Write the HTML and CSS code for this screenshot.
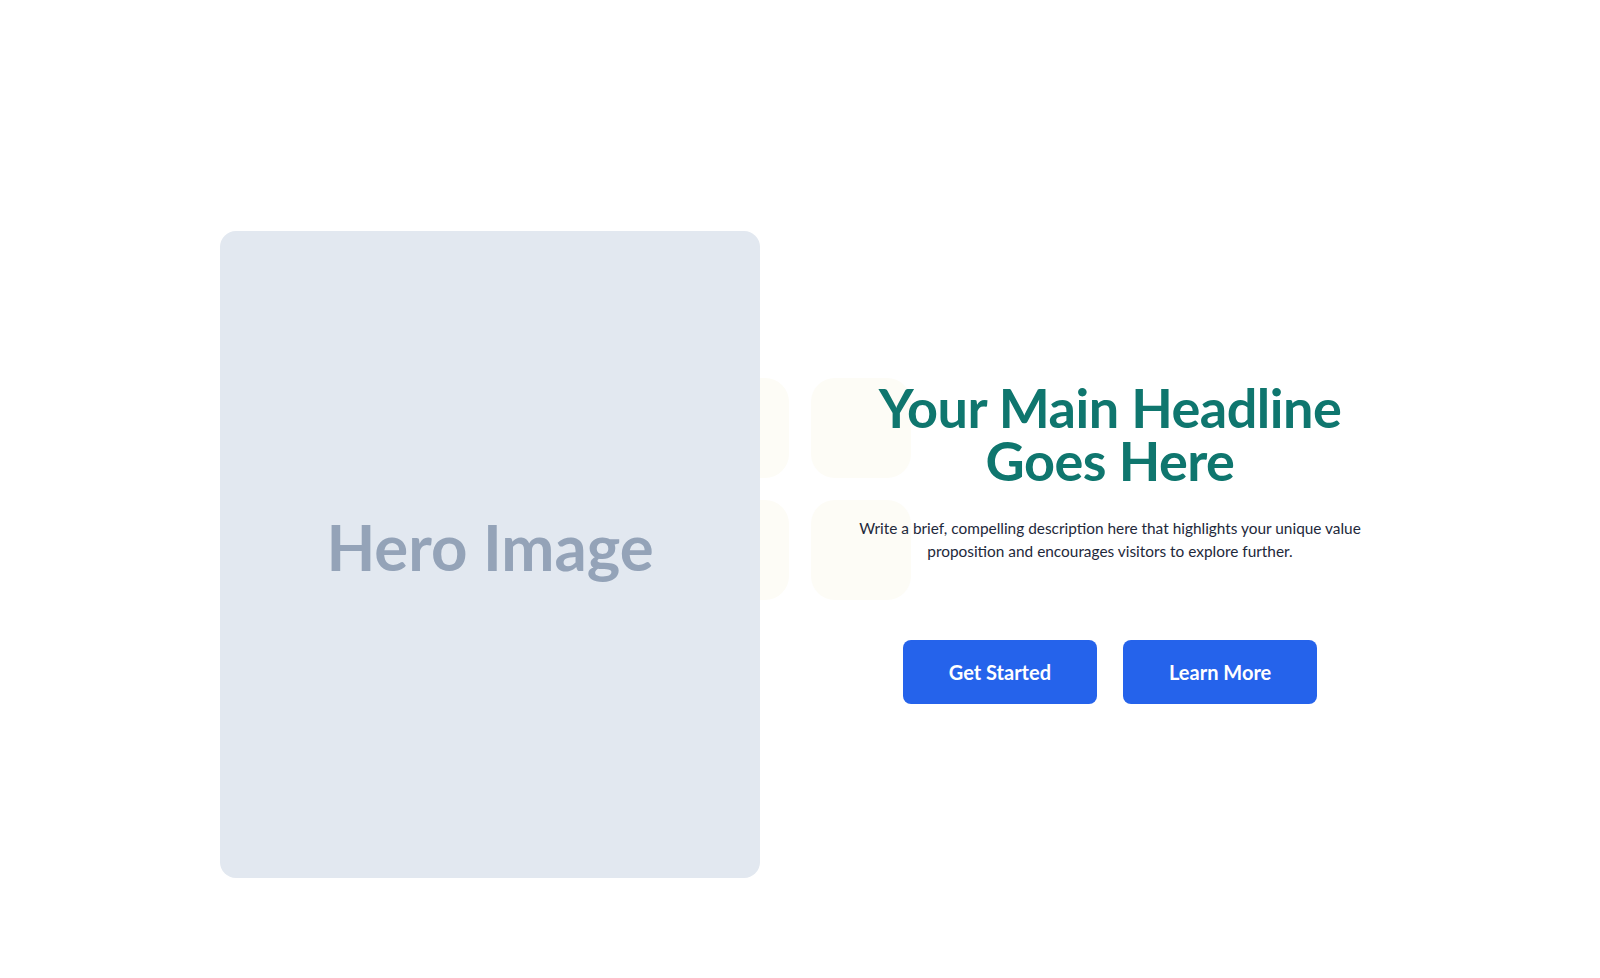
FILE: index.html
```html
<!DOCTYPE html>
<html lang="en">
<head>
<meta charset="utf-8">
<title>Hero</title>
<link rel="stylesheet" href="styles.css">
</head>
<body>
<section class="hero">
  <div class="hero-inner">
    <div class="decor" aria-hidden="true">
      <span class="decor-sq"></span>
      <span class="decor-sq"></span>
      <span class="decor-sq"></span>
      <span class="decor-sq"></span>
    </div>
    <div class="hero-media">
      <div class="hero-image">Hero Image</div>
    </div>
    <div class="hero-content">
      <h1 class="hero-title">Your Main Headline<br>Goes Here</h1>
      <p class="hero-text">Write a brief, compelling description here that highlights your unique value proposition and encourages visitors to explore further.</p>
      <div class="hero-actions">
        <a class="btn" href="#">Get Started</a>
        <a class="btn" href="#">Learn More</a>
      </div>
    </div>
  </div>
</section>
</body>
</html>
```
FILE: styles.css
```css
* { box-sizing: border-box; }
html, body { margin: 0; padding: 0; background: #ffffff; }
body { font-family: "Lato", "Inter", sans-serif; color: #1e293b; }

.hero {
  padding: 231px 0 100px;
}
.hero-inner {
  position: relative;
  max-width: 1160px;
  margin: 0 auto;
  display: grid;
  grid-template-columns: 1fr 1fr;
  column-gap: 80px;
  align-items: center;
}

.decor {
  position: absolute;
  left: 50%;
  top: 147px;
  transform: translateX(-50%);
  display: grid;
  grid-template-columns: 100px 100px;
  gap: 22px;
  z-index: 0;
}
.decor-sq {
  width: 100px;
  height: 100px;
  border-radius: 24px;
  background: #fdfcf6;
}

.hero-media { position: relative; z-index: 1; }
.hero-image {
  width: 540px;
  height: 647px;
  border-radius: 16px;
  background: #e2e8f0;
  color: #94a3b8;
  font-family: "Lato", sans-serif;
  font-weight: 700;
  font-size: 63.5px;
  line-height: 1;
  padding-bottom: 16px;
  display: flex;
  align-items: center;
  justify-content: center;
}

.hero-content {
  position: relative;
  z-index: 1;
  text-align: center;
  padding-bottom: 24px;
}
.hero-title {
  margin: 0;
  font-family: "Lato", sans-serif;
  font-weight: 700;
  font-size: 54px;
  line-height: 53px;
  color: #0f766e;
  letter-spacing: -0.5px;
}
.hero-text {
  margin: 30px auto 0;
  max-width: 520px;
  font-family: "Lato", sans-serif;
  font-size: 15.4px;
  line-height: 22.5px;
  color: #1e293b;
}
.hero-actions {
  margin-top: 78px;
  display: flex;
  justify-content: center;
  gap: 26px;
}
.btn {
  display: inline-flex;
  align-items: center;
  justify-content: center;
  height: 64px;
  padding: 0 46px;
  border-radius: 8px;
  background: #2563eb;
  color: #ffffff;
  font-family: "Lato", sans-serif;
  font-weight: 700;
  font-size: 20px;
  text-decoration: none;
}
```
